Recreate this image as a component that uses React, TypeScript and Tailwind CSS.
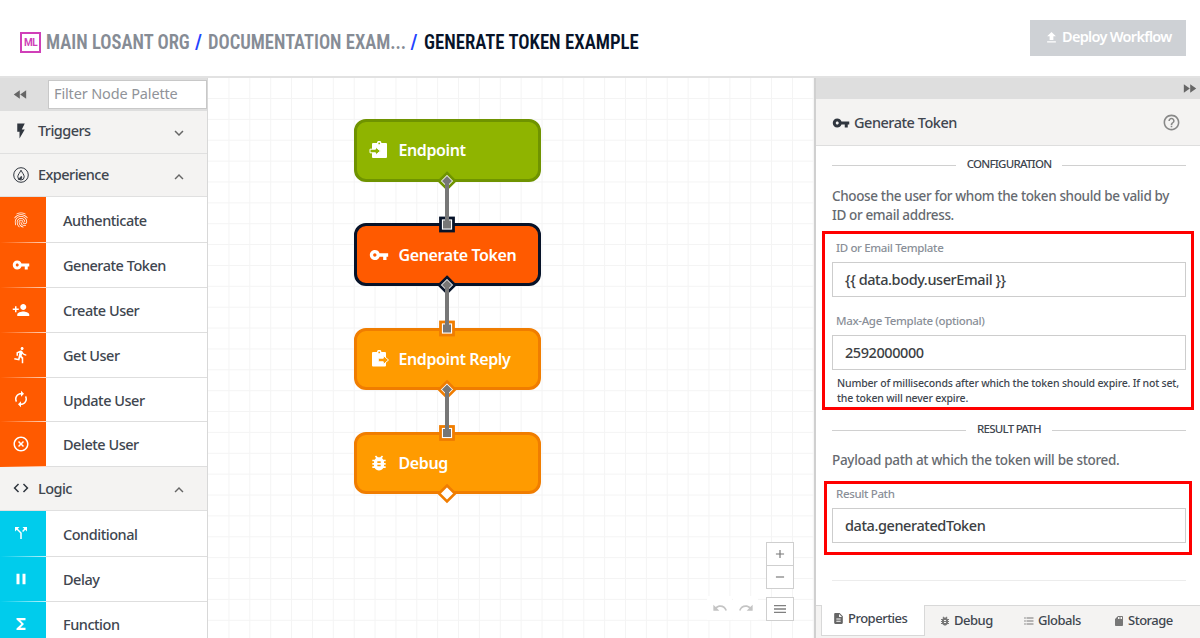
import type { ReactNode } from "react";
import type { IconType } from "react-icons";
import {
  MdAdd, MdAutorenew, MdBugReport, MdCallSplit, MdCode, MdDescription, MdDirectionsRun, MdExpandLess, MdExpandMore,
  MdFastForward, MdFastRewind, MdFileUpload, MdFingerprint, MdFlashOn, MdFormatListBulleted, MdFunctions,
  MdHelpOutline, MdHighlightOff, MdMenu, MdPause, MdPersonAdd, MdRedo, MdRemove,
  MdSdCard, MdUndo, MdVpnKey,
} from "react-icons/md";

const GRID = 20.87;

function FlameIcon() {
  return (
    <svg viewBox="0 0 16 16" className="h-4 w-4" fill="none" stroke="#30363f" strokeWidth="1">
      <circle cx="8" cy="8" r="7.3" />
      <path d="M8 3.200C7 5.700 4.800 7.500 4.800 9.800a3.200 3.200 0 0 0 6.400 0C11.200 7.500 9 5.700 8 3.200z" />
      <path d="M5.200 12.600 8.400 9c1 1.400.6 3-.8 3.600z" fill="#30363f" strokeWidth=".4" />
    </svg>
  );
}

function ClipboardIcon({ out = false }: { out?: boolean }) {
  return (
    <svg viewBox="0 0 18 18" className="h-[18px] w-[18px]">
      <path
        d={out ? "M2 2h4a2.200 2.200 0 0 1 4.400 0H14a1 1 0 0 1 1 1v12.500a1 1 0 0 1-1 1H2a1 1 0 0 1-1-1V3a1 1 0 0 1 1-1z" : "M4 2h4a2.200 2.200 0 0 1 4.400 0H17a1 1 0 0 1 1 1v13a1 1 0 0 1-1 1H4a1 1 0 0 1-1-1V3a1 1 0 0 1 1-1z"}
        fill="#fff"
      />
      <circle cx={out ? 8.2 : 10.2} cy="2.400" r=".9" fill={out ? "#ff9b00" : "#8fb400"} />
      {out ? (
        <path d="M7.300 8.200h5V5.500l5.200 4.500-5.200 4.500v-2.700h-5z" fill="#ff9b00" stroke="#fff" strokeWidth="1" />
      ) : (
        <path d="M1 8.200h5.500V6l5 4-5 4v-2.200H1z" fill="#8fb400" stroke="#fff" strokeWidth="1" />
      )}
    </svg>
  );
}

function PaletteHeader({ icon, label, open, className }: { icon: ReactNode; label: string; open: boolean; className: string }) {
  const Chevron = open ? MdExpandLess : MdExpandMore;
  return (
    <div className={`flex shrink-0 items-center border-b border-[#e0e0e0] bg-[#f4f3f2] pl-3 pr-[19px] text-[#30363f] ${className}`}>
      <span className="flex w-[26px] items-center">{icon}</span>
      <span className="flex-1 pt-px text-[14.5px] font-medium tracking-[-0.55px] text-[#40464f]">{label}</span>
      <Chevron className="mt-1 h-[18px] w-[18px] text-[#666]" />
    </div>
  );
}

function PaletteItem({ Icon, label, tone, tall }: { Icon: IconType; label: string; tone: string; tall?: boolean }) {
  return (
    <div className={`flex shrink-0 ${tall ? "h-[46px]" : "h-[44.850px]"}`}>
      <div className={`flex w-[46px] flex-col text-white ${tone}`}>
        <div className="flex flex-1 items-center pl-3">
          <Icon className="h-[18px] w-[18px]" />
        </div>
        <div className="h-px bg-linear-to-r from-transparent to-white/75" />
      </div>
      <div className="flex flex-1 items-center border-b border-[#dedede] pl-[17px] pt-[2px] text-[14.5px] font-medium tracking-[-0.48px] text-[#40464f]">
        {label}
      </div>
    </div>
  );
}

const EXPERIENCE: [IconType, string][] = [
  [MdFingerprint, "Authenticate"],
  [MdVpnKey, "Generate Token"],
  [MdPersonAdd, "Create User"],
  [MdDirectionsRun, "Get User"],
  [MdAutorenew, "Update User"],
  [MdHighlightOff, "Delete User"],
];

const LOGIC: [IconType, string][] = [
  [MdCallSplit, "Conditional"],
  [MdPause, "Delay"],
  [MdFunctions, "Function"],
];

function Sidebar() {
  return (
    <aside className="flex w-[208px] shrink-0 flex-col overflow-hidden border-r border-[#d8d8d8] bg-white">
      <div className="flex h-[33px] shrink-0 items-start bg-[#dedede] pt-[1.500px]">
        <div className="flex h-[30px] w-12 items-center pl-3 text-[#666]">
          <MdFastRewind className="h-[17px] w-[17px]" />
        </div>
        <div className="flex h-[29px] flex-1 items-center border border-[#c8c8c8] bg-white pl-[5px] text-[14.5px] tracking-[-0.14px] text-[#909399]">
          Filter Node Palette
        </div>
      </div>
      <PaletteHeader icon={<MdFlashOn className="h-[18px] w-[18px]" />} label="Triggers" open={false} className="h-[43px] pb-[3px]" />
      <PaletteHeader icon={<span className="pl-px"><FlameIcon /></span>} label="Experience" open className="h-[43px] pb-px" />
      {EXPERIENCE.map(([Icon, label], i) => (
        <PaletteItem key={label} Icon={Icon} label={label} tone="bg-[#ff5a00]" tall={i === 0} />
      ))}
      <PaletteHeader icon={<MdCode className="h-[18px] w-[18px]" />} label="Logic" open className="h-[43.700px] pb-px" />
      {LOGIC.map(([Icon, label], i) => (
        <PaletteItem key={label} Icon={Icon} label={label} tone="bg-[#00ccec]" tall={i === 0} />
      ))}
    </aside>
  );
}

function FlowNode({ icon, label, className }: { icon: ReactNode; label: string; className: string }) {
  return (
    <div className={`absolute left-[145.500px] flex h-[62.500px] w-[187.500px] items-center rounded-[12px] border-[3px] pl-3 text-white ${className}`}>
      <span className="flex w-[30px] items-center">{icon}</span>
      <span className="whitespace-nowrap text-[16px] font-semibold tracking-[-0.4px]">{label}</span>
    </div>
  );
}

function Links() {
  const links = [
    { from: 181, to: 224.5, out: "#6f9300", into: "#071329" },
    { from: 285, to: 328.5, out: "#071329", into: "#f07d00" },
    { from: 389.5, to: 433, out: "#f07d00", into: "#f07d00" },
  ];
  const diamond = (y: number, r: number) => `M447 ${y - r}L${447 + r} ${y}L447 ${y + r}L${447 - r} ${y}Z`;
  return (
    <svg viewBox="208 78 606 560" className="absolute inset-0 h-[560px] w-[606px]">
      {links.map((l) => (
        <g key={l.from}>
          <path d={diamond(l.from, 8)} fill="#fff" stroke={l.out} strokeWidth="2.600" />
          <path d={diamond(l.from, 5)} fill="#777" />
          <rect x="440.500" y={l.to - 6.5} width="13" height="13" fill="#fff" stroke={l.into} strokeWidth="2.800" />
          <rect x="443" y={l.to - 4} width="8" height="8" fill="#777" />
          <path d={`M447 ${l.from}V${l.to}`} stroke="#777" strokeWidth="4" />
        </g>
      ))}
      <path d={diamond(493.5, 8)} fill="#fff" stroke="#f07d00" strokeWidth="2.600" />
    </svg>
  );
}

function Canvas() {
  return (
    <main className="relative w-[606px] shrink-0 overflow-hidden bg-white">
      <svg viewBox="208 78 606 560" className="absolute inset-0 h-[560px] w-[606px]" stroke="#f4f4f4" strokeWidth="1">
        {Array.from({ length: 29 }, (_, i) => (
          <path key={`v${i}`} d={`M${208.1 + GRID * (i + 1)} 78V638`} />
        ))}
        {Array.from({ length: 26 }, (_, i) => (
          <path key={`h${i}`} d={`M208 ${98.5 + GRID * i}H814`} />
        ))}
      </svg>
      <FlowNode icon={<ClipboardIcon />} label="Endpoint" className="top-[41px] border-[#6f9300] bg-[#8fb400]" />
      <FlowNode icon={<MdVpnKey className="h-5 w-5" />} label="Generate Token" className="top-[145.300px] border-[#071329] bg-[#ff5a00]" />
      <FlowNode icon={<span className="pl-0.5"><ClipboardIcon out /></span>} label="Endpoint Reply" className="top-[249.500px] border-[#f07d00] bg-[#ff9b00]" />
      <FlowNode icon={<MdBugReport className="h-5 w-5" />} label="Debug" className="top-[353.800px] border-[#f07d00] bg-[#ff9b00]" />
      <Links />
      <div className="absolute left-[558px] top-[464px] flex w-7 flex-col border border-[#cfcfcf] bg-white text-[#777]">
        <span className="flex h-[23px] items-center justify-center border-b border-[#cfcfcf]"><MdAdd className="h-[14px] w-[14px]" /></span>
        <span className="flex h-[22px] items-center justify-center"><MdRemove className="h-[14px] w-[14px]" /></span>
      </div>
      <div className="absolute left-[499px] top-[518px] flex h-6 gap-px text-[#c4c4c4]">
        <span className="flex w-[25px] items-center justify-center bg-white"><MdUndo className="h-4 w-4" /></span>
        <span className="flex w-[25px] items-center justify-center bg-white"><MdRedo className="h-4 w-4" /></span>
      </div>
      <div className="absolute left-[558px] top-[518.500px] flex h-6 w-7 items-center justify-center border border-[#cfcfcf] bg-white text-[#808080]">
        <MdMenu className="h-4 w-4" />
      </div>
    </main>
  );
}

function SectionLabel({ children, className }: { children: string; className: string }) {
  return (
    <div className={`flex h-4 items-center text-[11.500px] font-medium text-[#40464f] ${className}`}>
      <span className="mt-0.5 h-px flex-1 bg-[#d0d0d0]" />
      <span className="px-[11px] tracking-[-0.75px]">{children}</span>
      <span className="mt-0.5 h-px flex-1 bg-[#d0d0d0]" />
    </div>
  );
}

function Field({ label, value }: { label: string; value: string }) {
  return (
    <div>
      <div className="h-[14px] pl-1 text-[11.500px] font-medium leading-[14px] tracking-[-0.35px] text-[#8a8f98]">{label}</div>
      <div className="mt-[7px] flex h-[35px] items-center border border-[#cdcdcd] pl-3 text-[14.500px] font-medium tracking-[-0.42px] text-[#3c3f44]">
        {value}
      </div>
    </div>
  );
}

const TABS: [IconType, string, string][] = [
  [MdBugReport, "Debug", "pl-[14px] w-[84px]"],
  [MdFormatListBulleted, "Globals", "pl-[14px] w-[90px]"],
  [MdSdCard, "Storage", "pl-[14px]"],
];

function Inspector() {
  return (
    <aside className="flex flex-1 flex-col border-l-2 border-[#d0d0d0] bg-white">
      <div className="flex h-[21px] shrink-0 items-center justify-end bg-[#dedede] pr-[2px] text-[#666]">
        <MdFastForward className="h-[17px] w-[17px]" />
      </div>
      <div className="flex h-[47px] shrink-0 items-center border-b border-[#dedede] bg-[#f4f3f2] pl-4 pr-[19px] text-[#30363f]">
        <MdVpnKey className="mt-0.5 h-[18px] w-[18px]" />
        <span className="ml-1 flex-1 pt-[2px] text-[14.500px] font-medium tracking-[-0.48px] text-[#40464f]">Generate Token</span>
        <MdHelpOutline className="h-[19px] w-[19px] text-[#888]" />
      </div>
      <div className="flex-1 pt-[10px]">
        <SectionLabel className="ml-4 mr-[14px]">CONFIGURATION</SectionLabel>
        <p className="ml-4 mt-[15px] text-[13.500px] font-medium leading-[19px] tracking-[-0.36px] text-[#666a70]">
          Choose the user for whom the token should be valid by
          <br />
          ID or email address.
        </p>
        <div className="ml-[6px] mr-[6px] mt-[6px] h-[179px] border-[3px] border-[#f00] pl-[7px] pr-[5px] pt-[7px]">
          <Field label="ID or Email Template" value="{{ data.body.userEmail }}" />
          <div className="h-[17px]" />
          <Field label="Max-Age Template (optional)" value="2592000000" />
          <p className="mt-[6px] whitespace-nowrap pl-[5px] text-[10.500px] font-medium leading-[14.500px] tracking-[-0.17px] text-[#40464f]">
            Number of milliseconds after which the token should expire. If not set,
            <br />
            the token will never expire.
          </p>
        </div>
        <SectionLabel className="ml-4 mr-[14px] mt-[11px]">RESULT PATH</SectionLabel>
        <p className="ml-4 mt-[14px] text-[13.500px] font-medium leading-[19px] tracking-[-0.3px] text-[#666a70]">
          Payload path at which the token will be stored.
        </p>
        <div className="ml-2 mr-2 mt-[11px] h-[74px] border-[3px] border-[#f00] pl-[5px] pr-[3px] pt-[3px]">
          <Field label="Result Path" value="data.generatedToken" />
        </div>
        <div className="ml-4 mr-[14px] mt-[25px] h-px bg-[#ececec]" />
      </div>
      <div className="flex h-[33px] shrink-0 bg-[#f4f3f2] text-[13px] font-medium tracking-[-0.5px] text-[#40464f]">
        <span className="w-[5px] border-t border-[#d8d8d8]" />
        <span className="flex h-[31px] w-[104px] items-center border border-t-0 border-[#d8d8d8] bg-white pb-[3px] pl-[10px]">
          <MdDescription className="mr-[3px] h-[13px] w-[13px] text-[#666]" />
          Properties
        </span>
        <div className="flex flex-1 border-t border-[#d8d8d8]">
          {TABS.map(([Icon, label, className]) => (
            <span key={label} className={`flex items-center pb-[3px] ${className}`}>
              <Icon className="mr-[3px] h-3 w-3 text-[#777]" />
              {label}
            </span>
          ))}
        </div>
      </div>
    </aside>
  );
}

export default function App() {
  return (
    <div className="flex h-[638px] w-[1200px] flex-col overflow-hidden bg-white font-['Noto_Sans',sans-serif]">
      <header className="flex h-[78px] shrink-0 items-center border-b-2 border-[#e2e2e2] pl-5 pr-[14px]">
        <span className="mt-2 flex h-[21px] w-[21px] items-center justify-center border-2 border-[#d03fb8] font-[Roboto] text-[10px] font-bold tracking-[-0.5px] text-[#d03fb8]">
          ML
        </span>
        <div className="mt-[9px] flex flex-1 whitespace-nowrap pl-[5px] font-['Roboto_Condensed',Roboto,sans-serif] text-[20.500px] font-semibold text-[#868c95]">
          <span className="w-[149px]"><span className="inline-block origin-left scale-x-[0.908]">MAIN LOSANT ORG</span></span>
          <span className="w-[12.500px] text-[#2344ff]">/</span>
          <span className="w-[203px]"><span className="inline-block origin-left scale-x-[0.905]">DOCUMENTATION EXAM...</span></span>
          <span className="w-[13px] text-[#2344ff]">/</span>
          <span className="inline-block origin-left scale-x-[0.915] text-[#071329]">GENERATE TOKEN EXAMPLE</span>
        </div>
        <button className="flex h-[36px] w-[156px] items-center bg-[#ced1d5] pb-0.5 pl-[14px] text-[14.500px] font-semibold tracking-[-0.7px] text-white">
          <MdFileUpload className="mr-[3px] h-[15px] w-[15px]" />
          Deploy Workflow
        </button>
      </header>
      <div className="flex min-h-0 flex-1">
        <Sidebar />
        <Canvas />
        <Inspector />
      </div>
    </div>
  );
}
